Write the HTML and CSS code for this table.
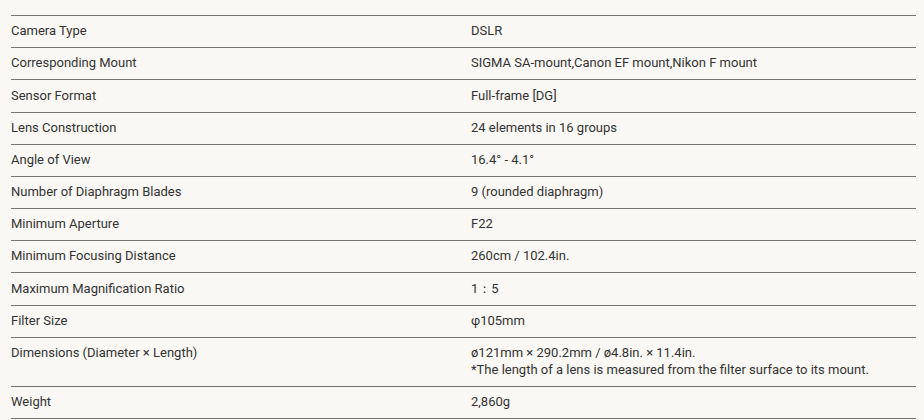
FILE: index.html
```html
<!DOCTYPE html>
<html lang="en">
<head>
<meta charset="utf-8">
<title>Specifications</title>
<link rel="stylesheet" href="styles.css">
</head>
<body>
<div class="page">
  <dl class="spec">
    <div class="row"><dt>Camera Type</dt><dd>DSLR</dd></div>
    <div class="row"><dt>Corresponding Mount</dt><dd>SIGMA SA-mount,Canon EF mount,Nikon F mount</dd></div>
    <div class="row"><dt>Sensor Format</dt><dd>Full-frame [DG]</dd></div>
    <div class="row"><dt>Lens Construction</dt><dd>24 elements in 16 groups</dd></div>
    <div class="row"><dt>Angle of View</dt><dd>16.4° - 4.1°</dd></div>
    <div class="row"><dt>Number of Diaphragm Blades</dt><dd>9 (rounded diaphragm)</dd></div>
    <div class="row"><dt>Minimum Aperture</dt><dd>F22</dd></div>
    <div class="row"><dt>Minimum Focusing Distance</dt><dd>260cm / 102.4in.</dd></div>
    <div class="row"><dt>Maximum Magnification Ratio</dt><dd>1：5</dd></div>
    <div class="row"><dt>Filter Size</dt><dd>φ105mm</dd></div>
    <div class="row"><dt>Dimensions (Diameter × Length)</dt><dd>ø121mm × 290.2mm / ø4.8in. × 11.4in.<br>*The length of a lens is measured from the filter surface to its mount.</dd></div>
    <div class="row"><dt>Weight</dt><dd>2,860g</dd></div>
  </dl>
</div>
</body>
</html>
```

FILE: styles.css
```css
html, body {
  margin: 0;
  padding: 0;
  background: #f9f8f4;
}
body {
  font-family: Roboto, "Liberation Sans", sans-serif;
  font-size: 13px;
  color: #333333;
}
.page {
  padding: 15px 8px 0 11px;
}
.spec {
  margin: 0;
  border-top: 1px solid #737373;
}
.row {
  display: grid;
  grid-template-columns: 460px 1fr;
  border-bottom: 1px solid #737373;
  padding: 7.2px 0;
  line-height: 16.8px;
}
.row dt, .row dd {
  margin: 0;
}
```
